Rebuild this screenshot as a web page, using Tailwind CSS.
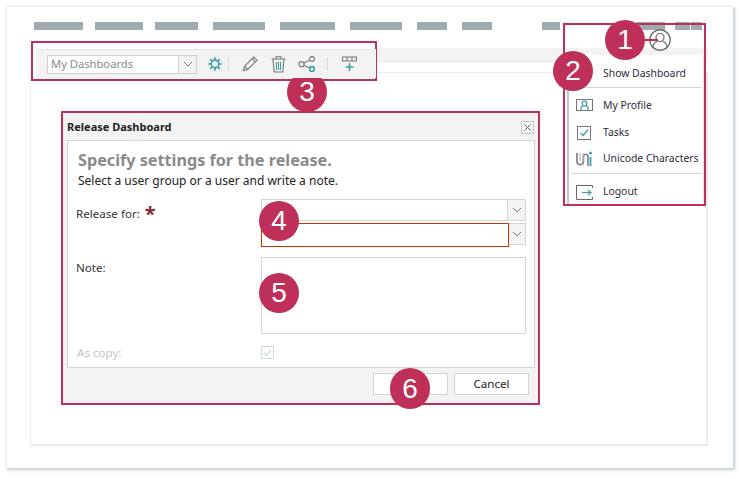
<!DOCTYPE html>
<html lang="en">
<head>
    <meta charset="UTF-8">
    <title>Release Dashboard</title>
    <script src="https://cdn.jsdelivr.net/npm/@tailwindcss/browser@4"></script>
</head>
<body class="bg-white w-[742px] h-[479px] overflow-hidden relative font-['Noto_Sans',sans-serif] text-[11.6px] text-[#333]">

    <!-- Page window -->
    <div class="ml-[7px] mt-[7px] w-[726px] h-[461px] bg-white shadow-[1px_1px_3px_1px_rgba(120,145,155,0.45)] pt-[15px] pl-[23px] pr-[25px]">
        <!-- Blurred out navigation -->
        <div class="flex h-[8px] pl-[4px]">
            <div class="w-[49px] bg-[#9eacb0]"></div>
            <div class="w-[48px] ml-[12px] bg-[#9eacb0]"></div>
            <div class="w-[43px] ml-[12px] bg-[#9eacb0]"></div>
            <div class="w-[52px] ml-[15px] bg-[#9eacb0]"></div>
            <div class="w-[55px] ml-[15px] bg-[#9eacb0]"></div>
            <div class="w-[52px] ml-[15px] bg-[#9eacb0]"></div>
            <div class="w-[30px] ml-[15px] bg-[#9eacb0]"></div>
            <div class="w-[30px] ml-[15px] bg-[#9eacb0]"></div>
            <div class="w-[18px] ml-[50px] bg-[#9eacb0]"></div>
            <div class="w-[29px] ml-[76px] bg-[#9eacb0]"></div>
            <div class="w-[15px] ml-[10px] bg-[#9eacb0]"></div>
            <div class="w-[11px] ml-[1px] bg-[#9eacb0]"></div>
        </div>

        <!-- Toolbar and content panel -->
        <div class="mt-[19px] w-[678px] h-[397px] flex flex-col">
            <div class="ml-[6px] w-[340px] shrink-0 flex items-center h-[29px] bg-[#f3f3f3] border-t border-[#e2e2e2] relative z-10">
                <div class="ml-[11px] w-[150px] h-[19px] flex bg-white border border-[#cfcfcf]">
                    <span class="flex-1 pl-[3px] leading-[16px] text-[11.2px] text-[#8a8a8a]">My Dashboards</span>
                    <span class="w-[18px] bg-[#f3f3f3] border-l border-[#cfcfcf] flex items-center justify-center">
                        <svg width="10" height="6" viewBox="0 0 10 6"><path d="M1 1l4 4 4-4" fill="none" stroke="#777" stroke-width="1"/></svg>
                    </span>
                </div>
                <!-- Gear -->
                <svg class="ml-[11px]" width="14" height="14" viewBox="0 0 14 14" fill="none" stroke="#3aa0a6" stroke-width="1.7">
                    <circle cx="7" cy="7" r="3.8"/>
                    <path d="M7 0.3v2.4M7 11.3v2.4M0.3 7h2.4M11.3 7h2.4M2.2 2.2l1.8 1.8M10 10l1.8 1.8M2.2 11.8L4 10M10 4l1.8-1.8"/>
                </svg>
                <div class="ml-[6px] w-[1px] h-[14px] bg-[#d8d8d8]"></div>
                <!-- Pencil -->
                <svg class="ml-[13px]" width="16" height="16" viewBox="0 0 16 16" fill="none" stroke="#777" stroke-width="1.1">
                    <path d="M1.5 14.5l1-4.2L11.8 1l3.2 3.2-9.3 9.3z"/>
                    <path d="M2.5 10.3l3.2 3.2M10.2 2.6l3.2 3.2"/>
                </svg>
                <!-- Trash -->
                <svg class="ml-[13px]" width="15" height="17" viewBox="0 0 15 17" fill="none" stroke="#777" stroke-width="1.1">
                    <path d="M0.5 3h14M5 3V0.8h5V3M2 3l1.2 13h8.6L13 3"/>
                    <path d="M5.5 6v8M7.5 6v8M9.5 6v8" stroke="#3aa0a6"/>
                </svg>
                <!-- Share -->
                <svg class="ml-[12px]" width="18" height="16" viewBox="0 0 18 16" fill="none" stroke="#777" stroke-width="1.1">
                    <path d="M5.5 7.2l6-3M5.5 9.3l6 2.4"/>
                    <circle cx="3.5" cy="8.2" r="2.6"/>
                    <circle cx="14" cy="3" r="2.4"/>
                    <circle cx="14" cy="13" r="2.4" stroke="#3aa0a6" stroke-width="1.6"/>
                </svg>
                <div class="ml-[11px] w-[1px] h-[14px] bg-[#d8d8d8]"></div>
                <!-- Add widget -->
                <svg class="ml-[14px]" width="15" height="16" viewBox="0 0 15 16" fill="none">
                    <path d="M0.5 1h14v4h-14zM5 1v4M10 1v4" stroke="#777" stroke-width="1.1"/>
                    <path d="M7.5 7v8M3.5 11h8" stroke="#3aa0a6" stroke-width="1.5"/>
                </svg>
            </div>
            <div class="flex-1 -mt-[5px] border border-t-0 border-[#ececec] border-b-2 border-r-2"></div>
        </div>
    </div>

    <!-- Toolbar right side strip -->
    <div class="absolute left-[376px] top-[48px] w-[332px] h-[14px] bg-[#f3f3f3] border-b border-[#e6e6e6]"></div>
    <div class="absolute left-[376px] top-[72px] w-[332px] h-[1px] bg-[#ececec]"></div>

    <!-- User menu -->
    <div class="absolute left-[567px] top-[55px] w-[137px] h-[150px] bg-white border-l-2 border-[#c4c4c4] border-r border-r-[#e4e4e4] pl-[2px] pr-[1px] text-[10.4px] text-[#2b2b3a]">
        <div class="h-[33px] pl-[32px] pt-[8px] leading-[20px] border-b border-[#d4d4d4] whitespace-nowrap">Show Dashboard</div>
        <div class="flex items-center h-[27px] mt-[4px]">
            <svg class="ml-[5px] shrink-0" width="17" height="13" viewBox="0 0 17 13" fill="none">
                <rect x="0.5" y="0.5" width="16" height="11" stroke="#777"/>
                <path d="M5 11V8.5L7 6.5M12 11V8.5L10 6.5" stroke="#3aa0a6" stroke-width="1.2"/>
                <circle cx="8.5" cy="4.6" r="2.4" stroke="#3aa0a6" stroke-width="1.2"/>
            </svg>
            <span class="ml-[10px] whitespace-nowrap">My Profile</span>
        </div>
        <div class="flex items-center h-[27px]">
            <svg class="ml-[6px] shrink-0" width="14" height="14" viewBox="0 0 14 14" fill="none">
                <rect x="0.5" y="0.5" width="13" height="13" stroke="#777"/>
                <path d="M3.5 7l2.5 2.5L11 3.5" stroke="#3aa0a6" stroke-width="1.2"/>
            </svg>
            <span class="ml-[12px] whitespace-nowrap">Tasks</span>
        </div>
        <div class="flex items-center h-[27px] -mt-[1px]">
            <svg class="ml-[5px] shrink-0" width="17" height="16" viewBox="0 0 17 16" fill="none">
                <path d="M1 2v8.5a3.2 3.2 0 0 0 6.4 0V5a2.4 2.4 0 0 1 4.6 0v10" stroke="#8a8a8a" stroke-width="1.8"/>
                <path d="M7.4 2v8M4 2v8" stroke="#aaa" stroke-width="1"/>
                <path d="M14.5 6v9" stroke="#3aa0a6" stroke-width="1.8"/>
                <circle cx="14.5" cy="2" r="1.5" fill="#3aa0a6"/>
            </svg>
            <span class="ml-[10px] whitespace-nowrap">Unicode Characters</span>
        </div>
        <div class="h-[1px] bg-[#d4d4d4] mt-[1px]"></div>
        <div class="flex items-center h-[36px]">
            <svg class="ml-[5px] shrink-0" width="17" height="15" viewBox="0 0 17 15" fill="none">
                <path d="M16.5 3V0.5H0.5v14h16V12" stroke="#666"/>
                <path d="M6 7.5h9M12 5l3 2.5-3 2.5" stroke="#3aa0a6" stroke-width="1.2"/>
            </svg>
            <span class="ml-[10px] whitespace-nowrap">Logout</span>
        </div>
    </div>

    <!-- User icon -->
    <svg class="absolute left-[649px] top-[29px]" width="22" height="22" viewBox="0 0 22 22" fill="none" stroke="#666" stroke-width="1.2">
        <circle cx="11" cy="11" r="10.2"/>
        <circle cx="11" cy="8.5" r="4"/>
        <path d="M3.8 18c1-3.6 3.4-5.3 4.6-5.5M18.2 18c-1-3.6-3.4-5.3-4.6-5.5"/>
    </svg>

    <!-- Release dialog -->
    <div class="absolute left-[63px] top-[113px] w-[475px] h-[290px] bg-[#f3f3f3] flex flex-col pl-[4px] pr-[3px]">
        <div class="flex items-center justify-between h-[27px] pt-[1px] shrink-0">
            <span class="text-[11px] font-bold text-[#222]">Release Dashboard</span>
            <span class="w-[13px] h-[13px] mr-[1px] border border-[#c8c8c8] bg-[#f8f8f8] flex items-center justify-center">
                <svg width="7" height="7" viewBox="0 0 7 7"><path d="M0.5 0.5l6 6M6.5 0.5l-6 6" stroke="#666" stroke-width="1"/></svg>
            </span>
        </div>
        <div class="h-[228px] shrink-0 bg-white border border-[#d6d6d6] px-[8px] flex flex-col">
            <div class="pl-[2px] mt-[8px] text-[16.2px] leading-[22px] font-bold text-[#8a8a8a]">Specify settings for the release.</div>
            <div class="pl-[2px] mt-[2px] text-[12px] leading-[16px] text-[#222]">Select a user group or a user and write a note.</div>
            <div class="flex mt-[10px]">
                <div class="w-[185px] shrink-0 pt-[5px] leading-[20px] flex">Release for:<span class="ml-[5px] text-[#8e2a3a] text-[20px] leading-[20px] font-bold">*</span></div>
                <div class="flex-1 flex flex-col">
                    <div class="flex h-[22px]">
                        <div class="w-[247px] border border-[#d4d4d4]"></div>
                        <div class="w-[18px] bg-[#f3f3f3] border border-l-0 border-[#d4d4d4] flex items-center justify-center">
                            <svg width="10" height="6" viewBox="0 0 10 6"><path d="M1 1l4 4 4-4" fill="none" stroke="#777"/></svg>
                        </div>
                    </div>
                    <div class="flex h-[24px] mt-[2px]">
                        <div class="w-[248px] h-[24px] border border-[#cc3300]"></div>
                        <div class="w-[17px] h-[22px] bg-[#f3f3f3] border border-l-0 border-[#d4d4d4] flex items-center justify-center">
                            <svg width="10" height="6" viewBox="0 0 10 6"><path d="M1 1l4 4 4-4" fill="none" stroke="#777"/></svg>
                        </div>
                    </div>
                </div>
            </div>
            <div class="flex mt-[10px]">
                <div class="w-[185px] shrink-0 pt-[1px] leading-[20px]">Note:</div>
                <div class="w-[265px] h-[77px] border border-[#d4d4d4]"></div>
            </div>
            <div class="flex items-center mt-[12px] h-[13px]">
                <div class="w-[185px] shrink-0 pl-[1px] pt-[1px] text-[#c4c4c4]">As copy:</div>
                <div class="w-[13px] h-[13px] border border-[#d8d8d8] flex items-center justify-center">
                    <svg width="9" height="8" viewBox="0 0 9 8"><path d="M1 4l2.5 2.5L8 1" fill="none" stroke="#c2dfe0" stroke-width="1.3"/></svg>
                </div>
            </div>
        </div>
        <div class="flex justify-end gap-[6px] mt-[5px] pr-[6px]">
            <div class="w-[75px] h-[22px] bg-white border border-[#d4d4d4]"></div>
            <div class="w-[75px] h-[22px] bg-white border border-[#d4d4d4] text-center leading-[20px] text-[#222]">Cancel</div>
        </div>
    </div>

    <!-- Annotation frames -->
    <div class="absolute left-[31px] top-[41px] w-[346px] h-[40px] border-2 border-[#bf3059]"></div>
    <div class="absolute left-[563px] top-[23px] w-[143px] h-[183px] border-2 border-[#bf3059]"></div>
    <div class="absolute left-[61px] top-[111px] w-[479px] h-[294px] border-2 border-[#bf3059]"></div>

    <!-- Annotation lines -->
    <div class="absolute left-[640px] top-[39px] w-[18px] h-[2px] bg-[#bf3059]"></div>
    <div class="absolute left-[306px] top-[66px] w-[2px] h-[10px] bg-[#bf3059]"></div>

    <!-- Number badges -->
    <div class="absolute left-[605px] top-[20px] w-[40px] h-[40px] rounded-full bg-[#bf3059] text-white flex items-center justify-center text-[28px] font-['Liberation_Sans',sans-serif]">1</div>
    <div class="absolute left-[553px] top-[51px] w-[40px] h-[40px] rounded-full bg-[#bf3059] text-white flex items-center justify-center text-[28px] font-['Liberation_Sans',sans-serif]">2</div>
    <div class="absolute left-[287px] top-[72px] w-[40px] h-[40px] rounded-full bg-[#bf3059] text-white flex items-center justify-center text-[28px] font-['Liberation_Sans',sans-serif]">3</div>
    <div class="absolute left-[259px] top-[201px] w-[40px] h-[40px] rounded-full bg-[#bf3059] text-white flex items-center justify-center text-[28px] font-['Liberation_Sans',sans-serif]">4</div>
    <div class="absolute left-[259px] top-[273px] w-[40px] h-[40px] rounded-full bg-[#bf3059] text-white flex items-center justify-center text-[28px] font-['Liberation_Sans',sans-serif]">5</div>
    <div class="absolute left-[390px] top-[368px] w-[40px] h-[41px] rounded-full bg-[#bf3059] text-white flex items-center justify-center text-[28px] font-['Liberation_Sans',sans-serif]">6</div>

</body>
</html>
